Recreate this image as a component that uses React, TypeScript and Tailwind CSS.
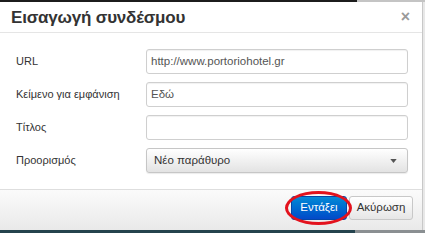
import React from 'react';

const rows = [
  { label: 'URL', value: 'http://www.portoriohotel.gr' },
  { label: 'Κείμενο για εμφάνιση', value: 'Εδώ' },
  { label: 'Τίτλος', value: '' },
];

export default function App() {
  return (
    <div className="relative w-[425px] h-[233px] overflow-hidden bg-white font-['Liberation_Sans',Arial,sans-serif] text-[#333]">
      {/* top strip */}
      <div className="flex h-[2px]">
        <div className="w-[357px] bg-[#1c1c1c]" />
        <div className="flex-1 bg-[#c4c4c4]" />
      </div>

      <div className="flex h-[228px]">
        <div className="w-[423px] flex flex-col border-r border-[#c8c8c8]">
          {/* header */}
          <div className="h-[31px] flex items-center justify-between pl-[11px] pr-[12px] border-b border-[#e5e5e5]">
            <h1 className="text-[17px] font-bold tracking-[-0.2px] text-[#333] leading-none">Εισαγωγή συνδέσμου</h1>
            <span className="text-[16px] font-bold text-[#9a9a9a] leading-none">×</span>
          </div>

          {/* form */}
          <div className="flex flex-col gap-[8px] pt-[16px] pb-[16px] pl-[16px]">
            {rows.map((r, i) => (
              <div key={i} className="flex items-center h-[25px]">
                <label className="w-[130px] text-[11px]">{r.label}</label>
                <div className="w-[262px] h-[25px] border border-[#cfcfcf] rounded-[3px] shadow-[inset_0_1px_1px_rgba(0,0,0,0.06)] flex items-center px-[4px] text-[11.5px] text-[#555]">
                  {r.value}
                </div>
              </div>
            ))}
            <div className="flex items-center h-[25px]">
              <label className="w-[130px] text-[11px]">Προορισμός</label>
              <div className="w-[262px] h-[25px] border border-[#c6c6c6] rounded-[3px] bg-gradient-to-b from-[#ffffff] to-[#e3e3e3] flex items-center justify-between px-[7px] text-[11.5px] text-[#333] shadow-[0_1px_1px_rgba(0,0,0,0.08)]">
                <span>Νέο παράθυρο</span>
                <svg width="7" height="4" viewBox="0 0 8 5" className="mr-[3px]">
                  <path d="M0 0h8L4 5z" fill="#555" />
                </svg>
              </div>
            </div>
          </div>

          {/* footer */}
          <div className="flex-1 border-t border-[#dedede] bg-gradient-to-b from-[#fbfbfb] to-[#e9e9e9] flex items-start justify-end pr-[9px] pt-[6px]">
            <div className="relative flex items-center">
              <button className="h-[24px] w-[56px] rounded-[3px] border border-[#0447a8] bg-gradient-to-b from-[#0a89d6] to-[#0549c8] text-white text-[11.5px]">
                Εντάξει
              </button>
              <div className="absolute left-[-6px] top-[-5px] w-[67px] h-[34px] rounded-[50%] border-[3px] border-[#e3121d]" />
              <button className="ml-[2px] h-[24px] w-[64px] rounded-[3px] border border-[#c8c8c8] bg-gradient-to-b from-[#ffffff] to-[#e6e6e6] text-[#333] text-[11.5px]">
                Ακύρωση
              </button>
            </div>
          </div>
        </div>
        <div className="flex-1 bg-[#e8e8e8]" />
      </div>

      {/* bottom strip */}
      <div className="flex h-[3px]">
        <div className="w-[355px] bg-[#24434d]" />
        <div className="flex-1 bg-[#8a8f92]" />
      </div>
    </div>
  );
}
